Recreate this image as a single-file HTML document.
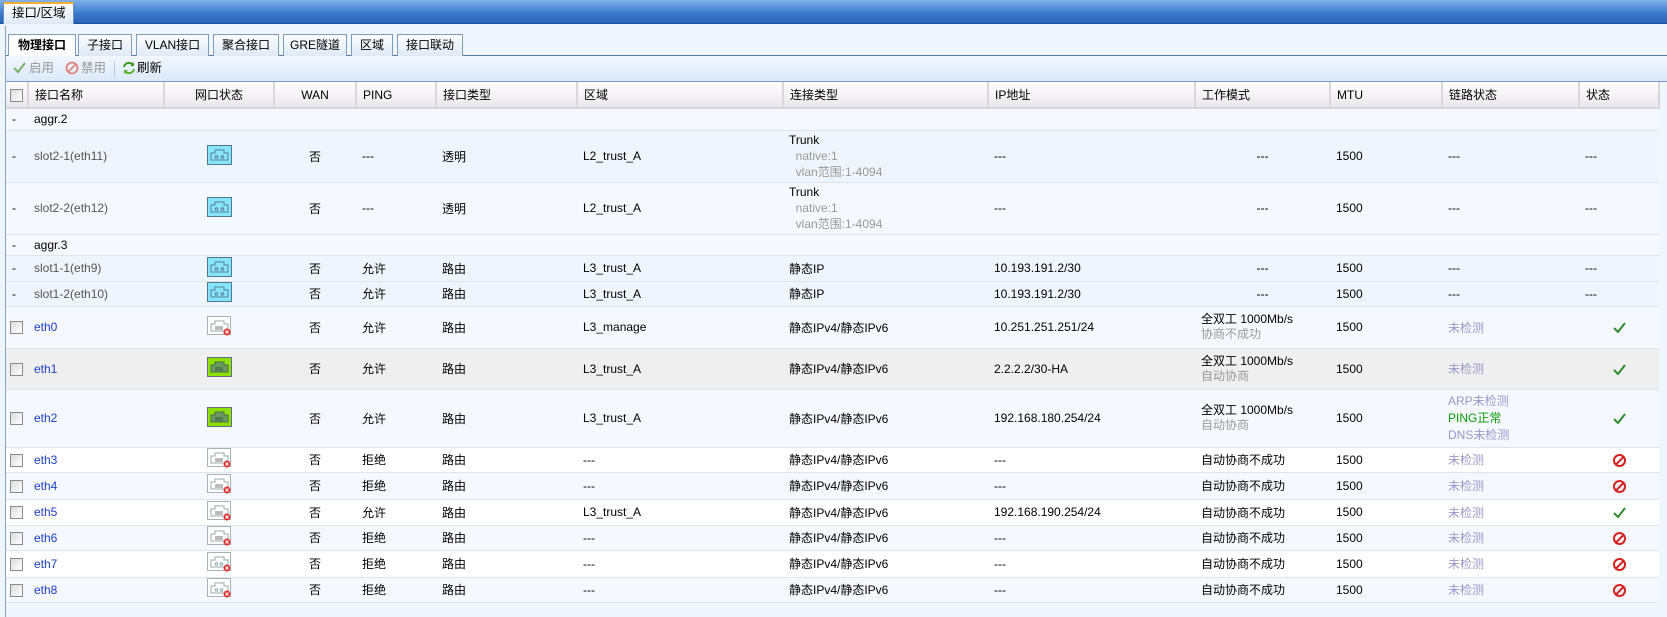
<!DOCTYPE html>
<html><head><meta charset="utf-8">
<style>
*{margin:0;padding:0;box-sizing:border-box}
body{width:1667px;height:617px;overflow:hidden;background:#eef5fd;font-family:"Liberation Sans","Noto Sans CJK SC",sans-serif;font-size:12px;color:#000;position:relative}
.top{position:absolute;left:0;top:0;width:1667px;height:24px;background:linear-gradient(#7fb2e8,#3a78cc 60%,#2a64b8);border-bottom:1px solid #1d4d94}
.toptab{position:absolute;left:3px;top:2px;width:71px;height:22px;background:linear-gradient(#fff,#dde9f7);border:1px solid #6a90c0;border-bottom:none;border-top:2px solid #f0b030;font-size:12.5px;line-height:18px;padding-left:8px}
.panel{position:absolute;left:5px;top:26px;width:1662px;height:591px;border-left:1px solid #8aa4c4;background:#f0f6fd}
.tabs{position:absolute;left:0;top:8px;width:1662px;height:22px;border-bottom:1px solid #5b7aa0}
.tab{position:absolute;top:0;height:22px;border:1px solid #7f9db9;border-bottom:none;background:linear-gradient(#fbfdff,#dfe9f5);font-size:12px;text-align:center;line-height:20px}
.tab.act{background:#fff;font-weight:bold;height:23px}
.tool{position:absolute;left:0;top:30px;width:1662px;height:26px;background:linear-gradient(#f2f7fe,#dbe9fa);border-bottom:1px solid #7a9cc4}
.tool span{position:absolute;top:0;line-height:25px;font-size:12.5px}
.tool svg{position:absolute;top:6px}
table{position:absolute;left:0;top:56px;border-collapse:collapse;table-layout:fixed;width:1653px}
th{height:26px;background:linear-gradient(#fffdff,#f4f1f5 60%,#e8e6ea);border-right:2px solid #d8d6da;border-bottom:2px solid #d8d8dc;font-weight:normal;text-align:left;padding-left:6px;font-size:12px}
td{border-bottom:1px solid #dfe4ea;padding-left:6px;white-space:nowrap;vertical-align:middle}
tr.a td{background:#f5f9ff}
tr.b td{background:#eef5fc}
tr.g td{background:#efefef}
tr.w td{background:#fff}
.c{text-align:center;padding-left:0}
.cb{display:inline-block;width:13px;height:13px;border:1px solid #8a8a8a;background:linear-gradient(135deg,#dcdcdc,#fff);vertical-align:middle}
.gr{color:#555}
.sub{color:#999}
.ln{color:#1b3fc8}
.nd{color:#9a98c8}
.ban{display:inline-block;width:13px;height:13px;border:2px solid #d42020;border-radius:50%;position:relative;vertical-align:middle}
.ban:after{content:"";position:absolute;left:4px;top:-1px;width:2px;height:11px;background:#d42020;transform:rotate(45deg)}
.ck{display:inline-block;width:13px;height:11px;vertical-align:middle}
</style></head><body>
<div class="top"><div class="toptab">接口/区域</div></div>
<div class="panel">
<div class="tabs">
<div class="tab act" style="left:2px;width:68px">物理接口</div>
<div class="tab" style="left:72px;width:54px">子接口</div>
<div class="tab" style="left:130px;width:73px">VLAN接口</div>
<div class="tab" style="left:207px;width:66px">聚合接口</div>
<div class="tab" style="left:277px;width:64px">GRE隧道</div>
<div class="tab" style="left:345px;width:42px">区域</div>
<div class="tab" style="left:391px;width:66px">接口联动</div>
</div>
<div class="tool">
<svg style="left:7px" width="13" height="12"><path d="M1 6l4 4 7-9" fill="none" stroke="#7ab06a" stroke-width="2"/></svg><span style="left:23px;color:#999">启用</span>
<svg style="left:59px;top:5px" width="14" height="14"><circle cx="7" cy="7" r="5.5" fill="none" stroke="#e08080" stroke-width="1.8"/><path d="M3 11L11 3" stroke="#e08080" stroke-width="1.8"/></svg><span style="left:75px;color:#999">禁用</span>
<span style="left:108px;top:5px;width:1px;height:16px;background:#b8c8dc"></span>
<svg style="left:116px;top:5px" width="14" height="14"><path d="M2 6a5 5 0 0 1 9-2" fill="none" stroke="#3a9a20" stroke-width="2"/><path d="M12 1v4h-4z" fill="#3a9a20"/><path d="M12 8a5 5 0 0 1-9 2" fill="none" stroke="#5ab030" stroke-width="2"/><path d="M2 13v-4h4z" fill="#5ab030"/></svg><span style="left:131px">刷新</span>
</div>
<table>
<colgroup><col style="width:22px"><col style="width:136px"><col style="width:110px"><col style="width:82px"><col style="width:80px"><col style="width:141px"><col style="width:206px"><col style="width:205px"><col style="width:207px"><col style="width:135px"><col style="width:112px"><col style="width:137px"><col style="width:80px"></colgroup>
<tr><th style="padding-left:4px"><i class="cb"></i></th><th>接口名称</th><th class="c">网口状态</th><th class="c">WAN</th><th>PING</th><th>接口类型</th><th>区域</th><th>连接类型</th><th>IP地址</th><th>工作模式</th><th>MTU</th><th>链路状态</th><th>状态</th></tr>
<tr class="a" style="height:22px"><td>-</td><td colspan="12">aggr.2</td></tr>
<tr class="b" style="height:52px"><td>-</td><td class="gr">slot2-1(eth11)</td><td class="c"><svg width="25" height="20"><rect x=".5" y=".5" width="24" height="19" fill="#86e4fb" stroke="#4d7a90"/><path d="M4 15V8h4V5h9v3h4v7z" fill="none" stroke="#5a7f98"/><circle cx="9.5" cy="12" r="1.3" fill="none" stroke="#5a7f98"/><circle cx="15.5" cy="12" r="1.3" fill="none" stroke="#5a7f98"/></svg></td><td class="c">否</td><td>---</td><td>透明</td><td>L2_trust_A</td><td style="line-height:16px">Trunk<br><span class="sub">&nbsp;&nbsp;native:1<br>&nbsp;&nbsp;vlan范围:1-4094</span></td><td>---</td><td class="c">---</td><td>1500</td><td>---</td><td>---</td></tr>
<tr class="a" style="height:52px"><td>-</td><td class="gr">slot2-2(eth12)</td><td class="c"><svg width="25" height="20"><rect x=".5" y=".5" width="24" height="19" fill="#86e4fb" stroke="#4d7a90"/><path d="M4 15V8h4V5h9v3h4v7z" fill="none" stroke="#5a7f98"/><circle cx="9.5" cy="12" r="1.3" fill="none" stroke="#5a7f98"/><circle cx="15.5" cy="12" r="1.3" fill="none" stroke="#5a7f98"/></svg></td><td class="c">否</td><td>---</td><td>透明</td><td>L2_trust_A</td><td style="line-height:16px">Trunk<br><span class="sub">&nbsp;&nbsp;native:1<br>&nbsp;&nbsp;vlan范围:1-4094</span></td><td>---</td><td class="c">---</td><td>1500</td><td>---</td><td>---</td></tr>
<tr class="a" style="height:21px"><td>-</td><td colspan="12">aggr.3</td></tr>
<tr class="b" style="height:26px"><td>-</td><td class="gr">slot1-1(eth9)</td><td class="c"><svg width="25" height="20"><rect x=".5" y=".5" width="24" height="19" fill="#86e4fb" stroke="#4d7a90"/><path d="M4 15V8h4V5h9v3h4v7z" fill="none" stroke="#5a7f98"/><circle cx="9.5" cy="12" r="1.3" fill="none" stroke="#5a7f98"/><circle cx="15.5" cy="12" r="1.3" fill="none" stroke="#5a7f98"/></svg></td><td class="c">否</td><td>允许</td><td>路由</td><td>L3_trust_A</td><td>静态IP</td><td>10.193.191.2/30</td><td class="c">---</td><td>1500</td><td>---</td><td>---</td></tr>
<tr class="b" style="height:25px"><td>-</td><td class="gr">slot1-2(eth10)</td><td class="c"><svg width="25" height="20"><rect x=".5" y=".5" width="24" height="19" fill="#86e4fb" stroke="#4d7a90"/><path d="M4 15V8h4V5h9v3h4v7z" fill="none" stroke="#5a7f98"/><circle cx="9.5" cy="12" r="1.3" fill="none" stroke="#5a7f98"/><circle cx="15.5" cy="12" r="1.3" fill="none" stroke="#5a7f98"/></svg></td><td class="c">否</td><td>允许</td><td>路由</td><td>L3_trust_A</td><td>静态IP</td><td>10.193.191.2/30</td><td class="c">---</td><td>1500</td><td>---</td><td>---</td></tr>
<tr class="a" style="height:42px"><td style="padding-left:4px"><i class="cb"></i></td><td class="ln">eth0</td><td class="c"><svg width="25" height="20"><rect x=".5" y=".5" width="23" height="18" fill="#fff" stroke="#a8b0b8"/><path d="M4 15V8h4V5h9v3h4v7z" fill="none" stroke="#9aa"/><path d="M9 10v4M11 10v4M13 10v4M15 10v4" stroke="#777"/><circle cx="20" cy="16" r="3.5" fill="#e03030"/><path d="M18.5 14.5l3 3M21.5 14.5l-3 3" stroke="#fff"/></svg></td><td class="c">否</td><td>允许</td><td>路由</td><td>L3_manage</td><td>静态IPv4/静态IPv6</td><td>10.251.251.251/24</td><td style="line-height:15px">全双工 1000Mb/s<br><span class="sub">协商不成功</span></td><td>1500</td><td class="nd">未检测</td><td class="c"><svg class="ck"><path d="M1 6l4 4 7-9" fill="none" stroke="#2e8b2e" stroke-width="2"/></svg></td></tr>
<tr class="g" style="height:41px"><td style="padding-left:4px"><i class="cb"></i></td><td class="ln">eth1</td><td class="c"><svg width="25" height="20"><rect x=".5" y=".5" width="24" height="19" fill="#8ee000" stroke="#607080"/><path d="M4 15V8h4V5h9v3h4v7z" fill="#6a9a60" stroke="#4a6a50"/><path d="M9 10v4M11 10v4M13 10v4M15 10v4" stroke="#3a5a40"/></svg></td><td class="c">否</td><td>允许</td><td>路由</td><td>L3_trust_A</td><td>静态IPv4/静态IPv6</td><td>2.2.2.2/30-HA</td><td style="line-height:15px">全双工 1000Mb/s<br><span class="sub">自动协商</span></td><td>1500</td><td class="nd">未检测</td><td class="c"><svg class="ck"><path d="M1 6l4 4 7-9" fill="none" stroke="#2e8b2e" stroke-width="2"/></svg></td></tr>
<tr class="a" style="height:58px"><td style="padding-left:4px"><i class="cb"></i></td><td class="ln">eth2</td><td class="c"><svg width="25" height="20"><rect x=".5" y=".5" width="24" height="19" fill="#8ee000" stroke="#607080"/><path d="M4 15V8h4V5h9v3h4v7z" fill="#6a9a60" stroke="#4a6a50"/><path d="M9 10v4M11 10v4M13 10v4M15 10v4" stroke="#3a5a40"/></svg></td><td class="c">否</td><td>允许</td><td>路由</td><td>L3_trust_A</td><td>静态IPv4/静态IPv6</td><td>192.168.180.254/24</td><td style="line-height:15px">全双工 1000Mb/s<br><span class="sub">自动协商</span></td><td>1500</td><td style="line-height:17px"><span class="nd">ARP未检测</span><br><span style="color:#0a9a0a">PING正常</span><br><span class="nd">DNS未检测</span></td><td class="c"><svg class="ck"><path d="M1 6l4 4 7-9" fill="none" stroke="#2e8b2e" stroke-width="2"/></svg></td></tr>
<tr class="w" style="height:25px"><td style="padding-left:4px"><i class="cb"></i></td><td class="ln">eth3</td><td class="c"><svg width="25" height="20"><rect x=".5" y=".5" width="23" height="18" fill="#fff" stroke="#a8b0b8"/><path d="M4 15V8h4V5h9v3h4v7z" fill="none" stroke="#9aa"/><path d="M9 10v4M11 10v4M13 10v4M15 10v4" stroke="#777"/><circle cx="20" cy="16" r="3.5" fill="#e03030"/><path d="M18.5 14.5l3 3M21.5 14.5l-3 3" stroke="#fff"/></svg></td><td class="c">否</td><td>拒绝</td><td>路由</td><td>---</td><td>静态IPv4/静态IPv6</td><td>---</td><td>自动协商不成功</td><td>1500</td><td class="nd">未检测</td><td class="c"><i class="ban"></i></td></tr>
<tr class="a" style="height:27px"><td style="padding-left:4px"><i class="cb"></i></td><td class="ln">eth4</td><td class="c"><svg width="25" height="20"><rect x=".5" y=".5" width="23" height="18" fill="#fff" stroke="#a8b0b8"/><path d="M4 15V8h4V5h9v3h4v7z" fill="none" stroke="#9aa"/><path d="M9 10v4M11 10v4M13 10v4M15 10v4" stroke="#777"/><circle cx="20" cy="16" r="3.5" fill="#e03030"/><path d="M18.5 14.5l3 3M21.5 14.5l-3 3" stroke="#fff"/></svg></td><td class="c">否</td><td>拒绝</td><td>路由</td><td>---</td><td>静态IPv4/静态IPv6</td><td>---</td><td>自动协商不成功</td><td>1500</td><td class="nd">未检测</td><td class="c"><i class="ban"></i></td></tr>
<tr class="w" style="height:26px"><td style="padding-left:4px"><i class="cb"></i></td><td class="ln">eth5</td><td class="c"><svg width="25" height="20"><rect x=".5" y=".5" width="23" height="18" fill="#fff" stroke="#a8b0b8"/><path d="M4 15V8h4V5h9v3h4v7z" fill="none" stroke="#9aa"/><path d="M9 10v4M11 10v4M13 10v4M15 10v4" stroke="#777"/><circle cx="20" cy="16" r="3.5" fill="#e03030"/><path d="M18.5 14.5l3 3M21.5 14.5l-3 3" stroke="#fff"/></svg></td><td class="c">否</td><td>允许</td><td>路由</td><td>L3_trust_A</td><td>静态IPv4/静态IPv6</td><td>192.168.190.254/24</td><td>自动协商不成功</td><td>1500</td><td class="nd">未检测</td><td class="c"><svg class="ck"><path d="M1 6l4 4 7-9" fill="none" stroke="#2e8b2e" stroke-width="2"/></svg></td></tr>
<tr class="a" style="height:25px"><td style="padding-left:4px"><i class="cb"></i></td><td class="ln">eth6</td><td class="c"><svg width="25" height="20"><rect x=".5" y=".5" width="23" height="18" fill="#fff" stroke="#a8b0b8"/><path d="M4 15V8h4V5h9v3h4v7z" fill="none" stroke="#9aa"/><path d="M9 10v4M11 10v4M13 10v4M15 10v4" stroke="#777"/><circle cx="20" cy="16" r="3.5" fill="#e03030"/><path d="M18.5 14.5l3 3M21.5 14.5l-3 3" stroke="#fff"/></svg></td><td class="c">否</td><td>拒绝</td><td>路由</td><td>---</td><td>静态IPv4/静态IPv6</td><td>---</td><td>自动协商不成功</td><td>1500</td><td class="nd">未检测</td><td class="c"><i class="ban"></i></td></tr>
<tr class="w" style="height:27px"><td style="padding-left:4px"><i class="cb"></i></td><td class="ln">eth7</td><td class="c"><svg width="25" height="20"><rect x=".5" y=".5" width="23" height="18" fill="#fff" stroke="#a8b0b8"/><path d="M4 15V8h4V5h9v3h4v7z" fill="none" stroke="#9aa"/><circle cx="9.5" cy="12" r="1.3" fill="none" stroke="#8aa"/><circle cx="14.5" cy="12" r="1.3" fill="none" stroke="#8aa"/><circle cx="20" cy="16" r="3.5" fill="#e03030"/><path d="M18.5 14.5l3 3M21.5 14.5l-3 3" stroke="#fff"/></svg></td><td class="c">否</td><td>拒绝</td><td>路由</td><td>---</td><td>静态IPv4/静态IPv6</td><td>---</td><td>自动协商不成功</td><td>1500</td><td class="nd">未检测</td><td class="c"><i class="ban"></i></td></tr>
<tr class="a" style="height:25px"><td style="padding-left:4px"><i class="cb"></i></td><td class="ln">eth8</td><td class="c"><svg width="25" height="20"><rect x=".5" y=".5" width="23" height="18" fill="#fff" stroke="#a8b0b8"/><path d="M4 15V8h4V5h9v3h4v7z" fill="none" stroke="#9aa"/><circle cx="9.5" cy="12" r="1.3" fill="none" stroke="#8aa"/><circle cx="14.5" cy="12" r="1.3" fill="none" stroke="#8aa"/><circle cx="20" cy="16" r="3.5" fill="#e03030"/><path d="M18.5 14.5l3 3M21.5 14.5l-3 3" stroke="#fff"/></svg></td><td class="c">否</td><td>拒绝</td><td>路由</td><td>---</td><td>静态IPv4/静态IPv6</td><td>---</td><td>自动协商不成功</td><td>1500</td><td class="nd">未检测</td><td class="c"><i class="ban"></i></td></tr>
</table>
</div>
</body></html>
